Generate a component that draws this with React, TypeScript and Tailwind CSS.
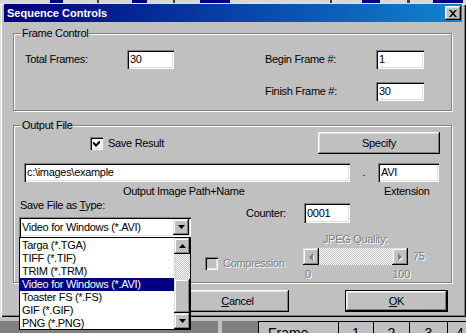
import React from "react";

const raised =
  "bg-[#c0c0c0] shadow-[inset_-1px_-1px_0_#000,inset_1px_1px_0_#fff,inset_-2px_-2px_0_#808080,inset_2px_2px_0_#dfdfdf]";
const raisedScroll =
  "bg-[#c0c0c0] shadow-[inset_-1px_-1px_0_#000,inset_1px_1px_0_#dfdfdf,inset_-2px_-2px_0_#808080,inset_2px_2px_0_#fff]";
const sunken =
  "bg-white shadow-[inset_1px_1px_0_#808080,inset_2px_2px_0_#000,inset_-1px_-1px_0_#fff,inset_-2px_-2px_0_#dfdfdf]";
const sunkenGray =
  "bg-[#c0c0c0] shadow-[inset_1px_1px_0_#808080,inset_2px_2px_0_#000,inset_-1px_-1px_0_#fff,inset_-2px_-2px_0_#dfdfdf]";
const etched = "border border-[#808080] shadow-[inset_1px_1px_0_#fff,1px_1px_0_#fff]";
const disabledText = "text-[#808080] [text-shadow:1px_1px_0_#fff]";
const checker =
  "bg-[image:repeating-conic-gradient(#c0c0c0_0%_25%,#ffffff_0%_50%)] bg-[length:2px_2px]";

function Edit({ className, children }: { className: string; children?: React.ReactNode }) {
  return <div className={`${sunken} flex items-center pl-[3px] shrink-0 ${className}`}>{children}</div>;
}

function Legend({ children }: { children: React.ReactNode }) {
  return (
    <span className="absolute left-[7px] top-[-7px] px-[1px] bg-[#c0c0c0] leading-[13px]">{children}</span>
  );
}

function Check({ checked, disabled }: { checked?: boolean; disabled?: boolean }) {
  return (
    <div className={`${disabled ? sunkenGray : sunken} w-[13px] h-[13px] shrink-0 flex items-center justify-center`}>
      {checked && (
        <svg width="7" height="7" viewBox="0 0 7 7">
          <path d="M0 2h1l2 2 3-3 1 0v2l-4 4-3-3z" fill="#000" />
        </svg>
      )}
    </div>
  );
}

function Tri({ dir, color = "#000" }: { dir: "up" | "down" | "left" | "right"; color?: string }) {
  if (dir === "up")
    return (
      <svg width="7" height="4" viewBox="0 0 7 4">
        <path d="M3.5 0L7 4H0z" fill={color} />
      </svg>
    );
  if (dir === "down")
    return (
      <svg width="7" height="4" viewBox="0 0 7 4">
        <path d="M0 0h7L3.5 4z" fill={color} />
      </svg>
    );
  if (dir === "left")
    return (
      <svg width="5" height="8" viewBox="0 0 5 8">
        <path d="M5 0v8L1 4z" fill="#fff" transform="translate(1 1)" />
        <path d="M4 0v8L0 4z" fill={color} />
      </svg>
    );
  return (
    <svg width="5" height="8" viewBox="0 0 5 8">
      <path d="M0 0v8L4 4z" fill="#fff" transform="translate(1 1)" />
      <path d="M0 0v8L4 4z" fill={color} />
    </svg>
  );
}

function TopStrip() {
  const seg = [
    ["w-[50px]", "bg-[#d8d8d8]"],
    ["w-[13px]", "bg-[#000080]"],
    ["w-[34px]", "bg-[#d8d8d8]"],
    ["w-[2px]", "bg-[#404040]"],
    ["w-[33px]", "bg-[#d8d8d8]"],
    ["w-[15px]", "bg-[#000080]"],
    ["w-[26px]", "bg-[#d8d8d8]"],
    ["w-[2px]", "bg-[#404040]"],
    ["w-[25px]", "bg-[#d8d8d8]"],
    ["w-[30px]", "bg-[#000080]"],
    ["w-[100px]", "bg-[#d8d8d8]"],
    ["w-[2px]", "bg-[#404040]"],
    ["w-[30px]", "bg-[#d8d8d8]"],
    ["w-[18px]", "bg-[#000080]"],
    ["w-[27px]", "bg-[#d8d8d8]"],
    ["w-[3px]", "bg-[#404040]"],
    ["w-[23px]", "bg-[#d8d8d8]"],
    ["w-[30px]", "bg-[#000080]"],
    ["w-[3px]", "bg-[#d8d8d8]"],
  ];
  return (
    <div className="h-[3px] flex shrink-0">
      {seg.map(([w, c], i) => (
        <div key={i} className={`${w} ${c} shrink-0`} />
      ))}
    </div>
  );
}

function DropList() {
  const items = [
    "Targa (*.TGA)",
    "TIFF (*.TIF)",
    "TRIM (*.TRM)",
    "Video for Windows (*.AVI)",
    "Toaster FS (*.FS)",
    "GIF (*.GIF)",
    "PNG (*.PNG)",
  ];
  return (
    <div className="absolute left-0 top-[20px] w-[172px] h-[93px] border border-black bg-white z-10 flex">
      <div className="flex-1 flex flex-col pt-[1px]">
        {items.map((t, i) => (
          <div
            key={t}
            className={`h-[13px] leading-[13px] pl-[2px] whitespace-nowrap ${
              i === 3 ? "bg-[#000080] text-white" : ""
            }`}
          >
            {t}
          </div>
        ))}
      </div>
      <div className="w-[16px] flex flex-col">
        <div className={`${raisedScroll} h-[16px] flex items-center justify-center`}>
          <Tri dir="up" />
        </div>
        <div className={`${checker} h-[25px]`} />
        <div className={`${raisedScroll} h-[34px]`} />
        <div className={`${raisedScroll} h-[16px] flex items-center justify-center`}>
          <Tri dir="down" />
        </div>
      </div>
    </div>
  );
}

function Dialog() {
  return (
    <div className="w-[466px] h-[314px] shrink-0 flex flex-col pt-[1px] px-[4px] bg-[#c0c0c0] shadow-[inset_1px_1px_0_#dfdfdf,inset_2px_2px_0_#fff,inset_-1px_-1px_0_#000,inset_-2px_-2px_0_#808080]">
      {/* title bar */}
      <div className="h-[18px] shrink-0 flex items-center pl-[3px] bg-[linear-gradient(to_right,#000080,#1084d0)]">
        <span className="text-white font-bold tracking-normal text-[11px]">Sequence Controls</span>
        <div className={`${raised} ml-auto mr-[1px] w-[16px] h-[14px] flex items-center justify-center`}>
          <svg width="8" height="7" viewBox="0 0 8 7">
            <path d="M0 0h2l2 2.3L6 0h2L5 3.5 8 7H6L4 4.7 2 7H0l3-3.5z" fill="#000" />
          </svg>
        </div>
      </div>

      {/* body */}
      <div className="flex flex-col pl-[9px] pt-[11px]">
        {/* Frame Control */}
        <div className={`${etched} relative w-[439px] h-[78px] shrink-0`}>
          <Legend>Frame Control</Legend>
          <div className="grid grid-cols-[102px_47px_91px_111px_48px] gap-y-[13px] items-center pt-[16px] pl-[11px]">
            <span>Total Frames:</span>
            <Edit className="w-[47px] h-[19px]">30</Edit>
            <div />
            <span>Begin Frame #:</span>
            <Edit className="w-[48px] h-[19px]">1</Edit>
            <span className="col-start-4">Finish Frame #:</span>
            <Edit className="w-[48px] h-[19px]">30</Edit>
          </div>
        </div>

        {/* Output File */}
        <div className={`${etched} relative w-[439px] h-[158px] shrink-0 mt-[14px]`}>
          <Legend>Output File</Legend>
          <div className="flex flex-col pt-[6px]">
            <div className="flex items-center h-[22px] pl-[76px] pr-[11px]">
              <Check checked />
              <span className="ml-[5px]">Save Result</span>
              <div className={`${raised} ml-auto w-[122px] h-[22px] flex items-center justify-center`}>
                Specify
              </div>
            </div>
            <div className="flex items-center h-[19px] mt-[9px] pl-[10px]">
              <Edit className="w-[326px] h-[19px]">c:\images\example</Edit>
              <span className="w-[28px] text-center">.</span>
              <Edit className="w-[61px] h-[19px]">AVI</Edit>
            </div>
            <div className="flex h-[13px] mt-[3px] pl-[109px]">
              <span className="w-[261px] shrink-0">Output Image Path+Name</span>
              <span>Extension</span>
            </div>
            <div className="flex items-start h-[34px] mt-[1px]">
              <div className="relative ml-[5px] w-[172px] shrink-0 flex flex-col">
                <span className="pl-[1px] h-[13px]">
                  Save File as <span className="underline">T</span>ype:
                </span>
                <div className="relative mt-[5px]">
                  <div className={`${sunken} h-[20px] flex items-center pl-[3px] pr-[2px]`}>
                    <span className="flex-1">Video for Windows (*.AVI)</span>
                    <div className={`${raisedScroll} w-[16px] h-[16px] flex items-center justify-center`}>
                      <Tri dir="down" />
                    </div>
                  </div>
                  <DropList />
                </div>
              </div>
              <div className="ml-[55px] mt-[4px] flex items-center">
                <span className="w-[58px]">Counter:</span>
                <Edit className="w-[46px] h-[20px]">0001</Edit>
              </div>
            </div>
            <div className="flex items-start h-[50px]">
              <div className="ml-[191px] w-[98px] shrink-0 pt-[24px] flex items-center">
                <Check disabled />
                <span className={`ml-[5px] ${disabledText}`}>Compression</span>
              </div>
              <div className="flex flex-col w-[130px]">
                <span className={`w-[105px] h-[13px] text-center ${disabledText}`}>JPEG Quality:</span>
                <div className="flex items-center mt-[2px]">
                  <div className="w-[105px] h-[17px] flex">
                    <div className={`${raisedScroll} w-[16px] h-[17px] flex items-center justify-center`}>
                      <Tri dir="left" color="#808080" />
                    </div>
                    <div className={`${checker} flex-1`} />
                    <div className={`${raisedScroll} w-[16px] h-[17px] flex items-center justify-center`}>
                      <Tri dir="right" color="#808080" />
                    </div>
                  </div>
                  <span className={`ml-[5px] ${disabledText}`}>75</span>
                </div>
                <div className="w-[107px] flex justify-between mt-[3px] pl-[2px]">
                  <span className={disabledText}>0</span>
                  <span className={disabledText}>100</span>
                </div>
              </div>
            </div>
          </div>
        </div>

        {/* Buttons */}
        <div className="flex mt-[7px]">
          <div className={`${raised} ml-[173px] w-[103px] h-[22px] flex items-center justify-center`}>
            <span>
              <span className="underline">C</span>ancel
            </span>
          </div>
          <div className="ml-[56px] w-[103px] h-[22px] border border-black">
            <div className={`${raised} w-full h-full flex items-center justify-center`}>
              <span>
                <span className="underline">O</span>K
              </span>
            </div>
          </div>
        </div>
      </div>
    </div>
  );
}

function BottomArea() {
  return (
    <div className="flex-1 flex flex-col">
      <div className="h-[4px] bg-[#c0c0c0]" />
      <div className="flex-1 flex">
        <div className="w-[218px] bg-[#808080]" />
        <div className="w-[4px] bg-[#c0c0c0]" />
        <div className="w-[36px] bg-[#808080]" />
        <div className="flex-1 flex border-t border-black bg-[#c0c0c0] text-[14px] leading-[14px] tracking-normal">
          <div className="w-[80px] border-l border-black pl-[9px] pt-[4px]">Frame</div>
          <div className="w-[35px] border-l border-black text-center pt-[4px]">1</div>
          <div className="w-[36px] border-l border-black text-center pt-[4px]">2</div>
          <div className="w-[38px] border-l border-black text-center pt-[4px]">3</div>
          <div className="flex-1 border-l border-black pl-[8px] pt-[4px]">4</div>
        </div>
      </div>
    </div>
  );
}

export default function App() {
  return (
    <div className="w-[466px] h-[333px] overflow-hidden bg-[#c0c0c0] font-['Liberation_Sans',Arial,sans-serif] text-[11px] leading-[13px] tracking-[-0.3px] text-black flex flex-col">
      <TopStrip />
      <Dialog />
      <BottomArea />
    </div>
  );
}
